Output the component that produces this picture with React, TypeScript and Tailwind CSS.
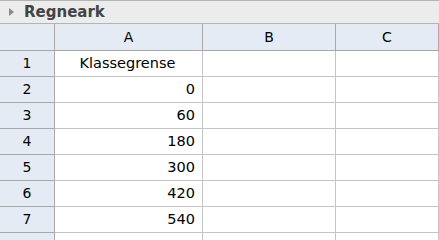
const cols = ["A", "B", "C"];
const rows: { n: number; a: string; align: "center" | "right" }[] = [
  { n: 1, a: "Klassegrense", align: "center" },
  { n: 2, a: "0", align: "right" },
  { n: 3, a: "60", align: "right" },
  { n: 4, a: "180", align: "right" },
  { n: 5, a: "300", align: "right" },
  { n: 6, a: "420", align: "right" },
  { n: 7, a: "540", align: "right" },
  { n: 8, a: "", align: "right" },
];

const gridCols = "grid grid-cols-[55px_148px_133px_103px]";

export default function App() {
  return (
    <div className="w-[439px] h-[240px] overflow-hidden bg-white text-black font-['DejaVu_Sans',sans-serif]">
      {/* Title bar */}
      <div className="h-[24px] bg-[#ececec] border-t border-b border-[#b4b4b4] flex items-center pl-[9px]">
        <span className="w-0 h-0 border-l-[5px] border-l-[#8a8a8a] border-y-[4px] border-y-transparent" />
        <span className="ml-[10px] text-[15px] font-bold text-[#444] leading-none">Regneark</span>
      </div>

      {/* Column headers */}
      <div className={gridCols}>
        <div className="h-[27px] bg-[#e4ebf5] border-r border-b border-[#a8a8a8]" />
        {cols.map((c) => (
          <div
            key={c}
            className="h-[27px] bg-[#e4ebf5] border-r border-b border-[#a8a8a8] flex items-center justify-center text-[14px]"
          >
            {c}
          </div>
        ))}
      </div>

      {/* Rows */}
      {rows.map((r) => (
        <div key={r.n} className={gridCols}>
          <div className="h-[26px] bg-[#e4ebf5] border-r border-b border-[#a8a8a8] flex items-center justify-center text-[14px]">
            {r.n}
          </div>
          <div
            className={`h-[26px] border-r border-b border-[#c4c4c4] flex items-center pl-[5px] pr-[7px] text-[14.5px] ${
              r.align === "center" ? "justify-center" : "justify-end"
            }`}
          >
            {r.a}
          </div>
          <div className="h-[26px] border-r border-b border-[#c4c4c4]" />
          <div className="h-[26px] border-r border-b border-[#c4c4c4]" />
        </div>
      ))}
    </div>
  );
}
